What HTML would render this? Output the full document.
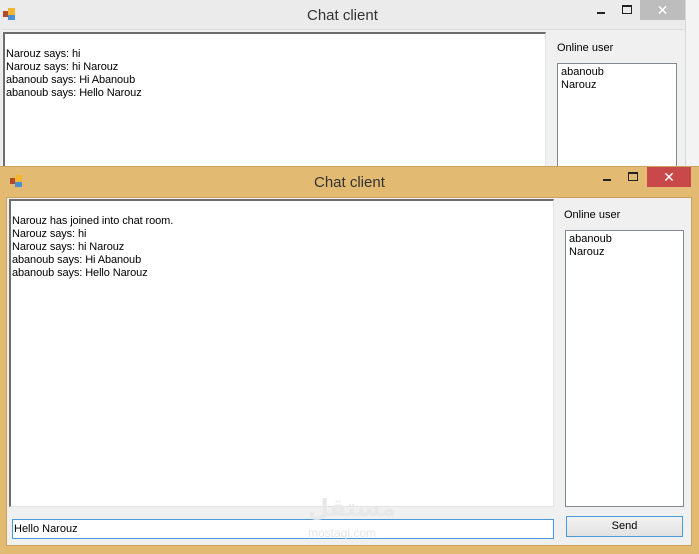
<html><head><style>
body{margin:0;width:699px;height:553px;overflow:hidden;background:#f0f0f0;font-family:"Liberation Sans",sans-serif;font-size:11px;position:relative}
.a{position:absolute}
.t{font-size:15px;color:#333}
.box{background:#fff;border:1px solid #828790;box-sizing:border-box}
.chat{border-top:2px solid #6d6d6d;border-left:2px solid #6d6d6d;border-right:1px solid #e3e3e3;border-bottom:1px solid #e3e3e3;background:#fff;box-sizing:border-box;line-height:13px;padding:14px 0 0 1px;color:#000;letter-spacing:-0.1px}
</style></head><body>
<div class="a" style="left:0;top:0;width:685px;height:166px;background:#ebebeb;border-right:1px solid #d8d8d8"></div>
<div class="a" style="left:686px;top:0;width:13px;height:166px;background:#f3f3f3"></div>
<div class="a" style="left:2px;top:29px;width:683px;height:140px;background:#f0f0f0;border-top:1px solid #ddd"></div>
<svg class="a" style="left:3px;top:8px" width="13" height="13"><rect x="0" y="3" width="5" height="6" fill="#b04a2a"/><rect x="5" y="0" width="7" height="7" fill="#f2b630"/><rect x="5" y="7" width="7" height="5" fill="#4a90d0"/></svg>
<div class="a t" style="left:307px;top:7px">Chat client</div>
<div class="a" style="left:597px;top:12px;width:8px;height:2px;background:#222"></div>
<div class="a" style="left:622px;top:5px;width:8px;height:6px;border:1px solid #222;border-top-width:2px"></div>
<div class="a" style="left:640px;top:0;width:45px;height:20px;background:#bdbdbd;color:#fff;text-align:center;font-size:14px;line-height:20px">✕</div>
<div class="a chat" style="left:3px;top:32px;width:543px;height:140px">Narouz says: hi<br>Narouz says: hi Narouz<br>abanoub says: Hi Abanoub<br>abanoub says: Hello Narouz</div>
<div class="a" style="left:557px;top:42px">Online user</div>
<div class="a box" style="left:557px;top:63px;width:120px;height:110px;padding:2px 3px;line-height:13px">abanoub<br>Narouz</div>
<div class="a" style="left:0;top:166px;width:699px;height:387px;background:#e2ba72;border-top:1px solid #c9a060"></div>
<div class="a" style="left:6px;top:197px;width:686px;height:349px;background:#f0f0f0;border:1px solid #c8a25e;box-sizing:border-box"></div>
<svg class="a" style="left:10px;top:175px" width="13" height="13"><rect x="0" y="3" width="5" height="6" fill="#b04a2a"/><rect x="5" y="0" width="7" height="7" fill="#f2b630"/><rect x="5" y="7" width="7" height="5" fill="#4a90d0"/></svg>
<div class="a t" style="left:314px;top:174px">Chat client</div>
<div class="a" style="left:603px;top:179px;width:8px;height:2px;background:#222"></div>
<div class="a" style="left:628px;top:172px;width:8px;height:6px;border:1px solid #222;border-top-width:2px"></div>
<div class="a" style="left:647px;top:167px;width:44px;height:20px;background:#c9494a;color:#fff;text-align:center;font-size:14px;line-height:20px">✕</div>
<div class="a chat" style="left:9px;top:199px;width:545px;height:308px">Narouz has joined into chat room.<br>Narouz says: hi<br>Narouz says: hi Narouz<br>abanoub says: Hi Abanoub<br>abanoub says: Hello Narouz</div>
<div class="a" style="left:564px;top:209px">Online user</div>
<div class="a box" style="left:565px;top:230px;width:119px;height:277px;padding:2px 3px;line-height:13px">abanoub<br>Narouz</div>
<div class="a" style="left:12px;top:519px;width:542px;height:20px;border:1px solid #4a98e0;box-sizing:border-box;background:#fff;padding:3px 1px;line-height:13px">Hello Narouz</div>
<div class="a" style="left:566px;top:516px;width:117px;height:21px;border:1px solid #4a98e0;box-sizing:border-box;background:linear-gradient(#f2f2f2,#e2e2e2);text-align:center;line-height:19px">Send</div>
<div class="a" style="left:308px;top:494px;color:#e8e8e8;font-size:24px;font-weight:bold;font-family:'DejaVu Sans',sans-serif">مستقل</div>
<div class="a" style="left:308px;top:526px;color:#e6e6e6;font-size:12px">mostaql.com</div>
</body></html>
